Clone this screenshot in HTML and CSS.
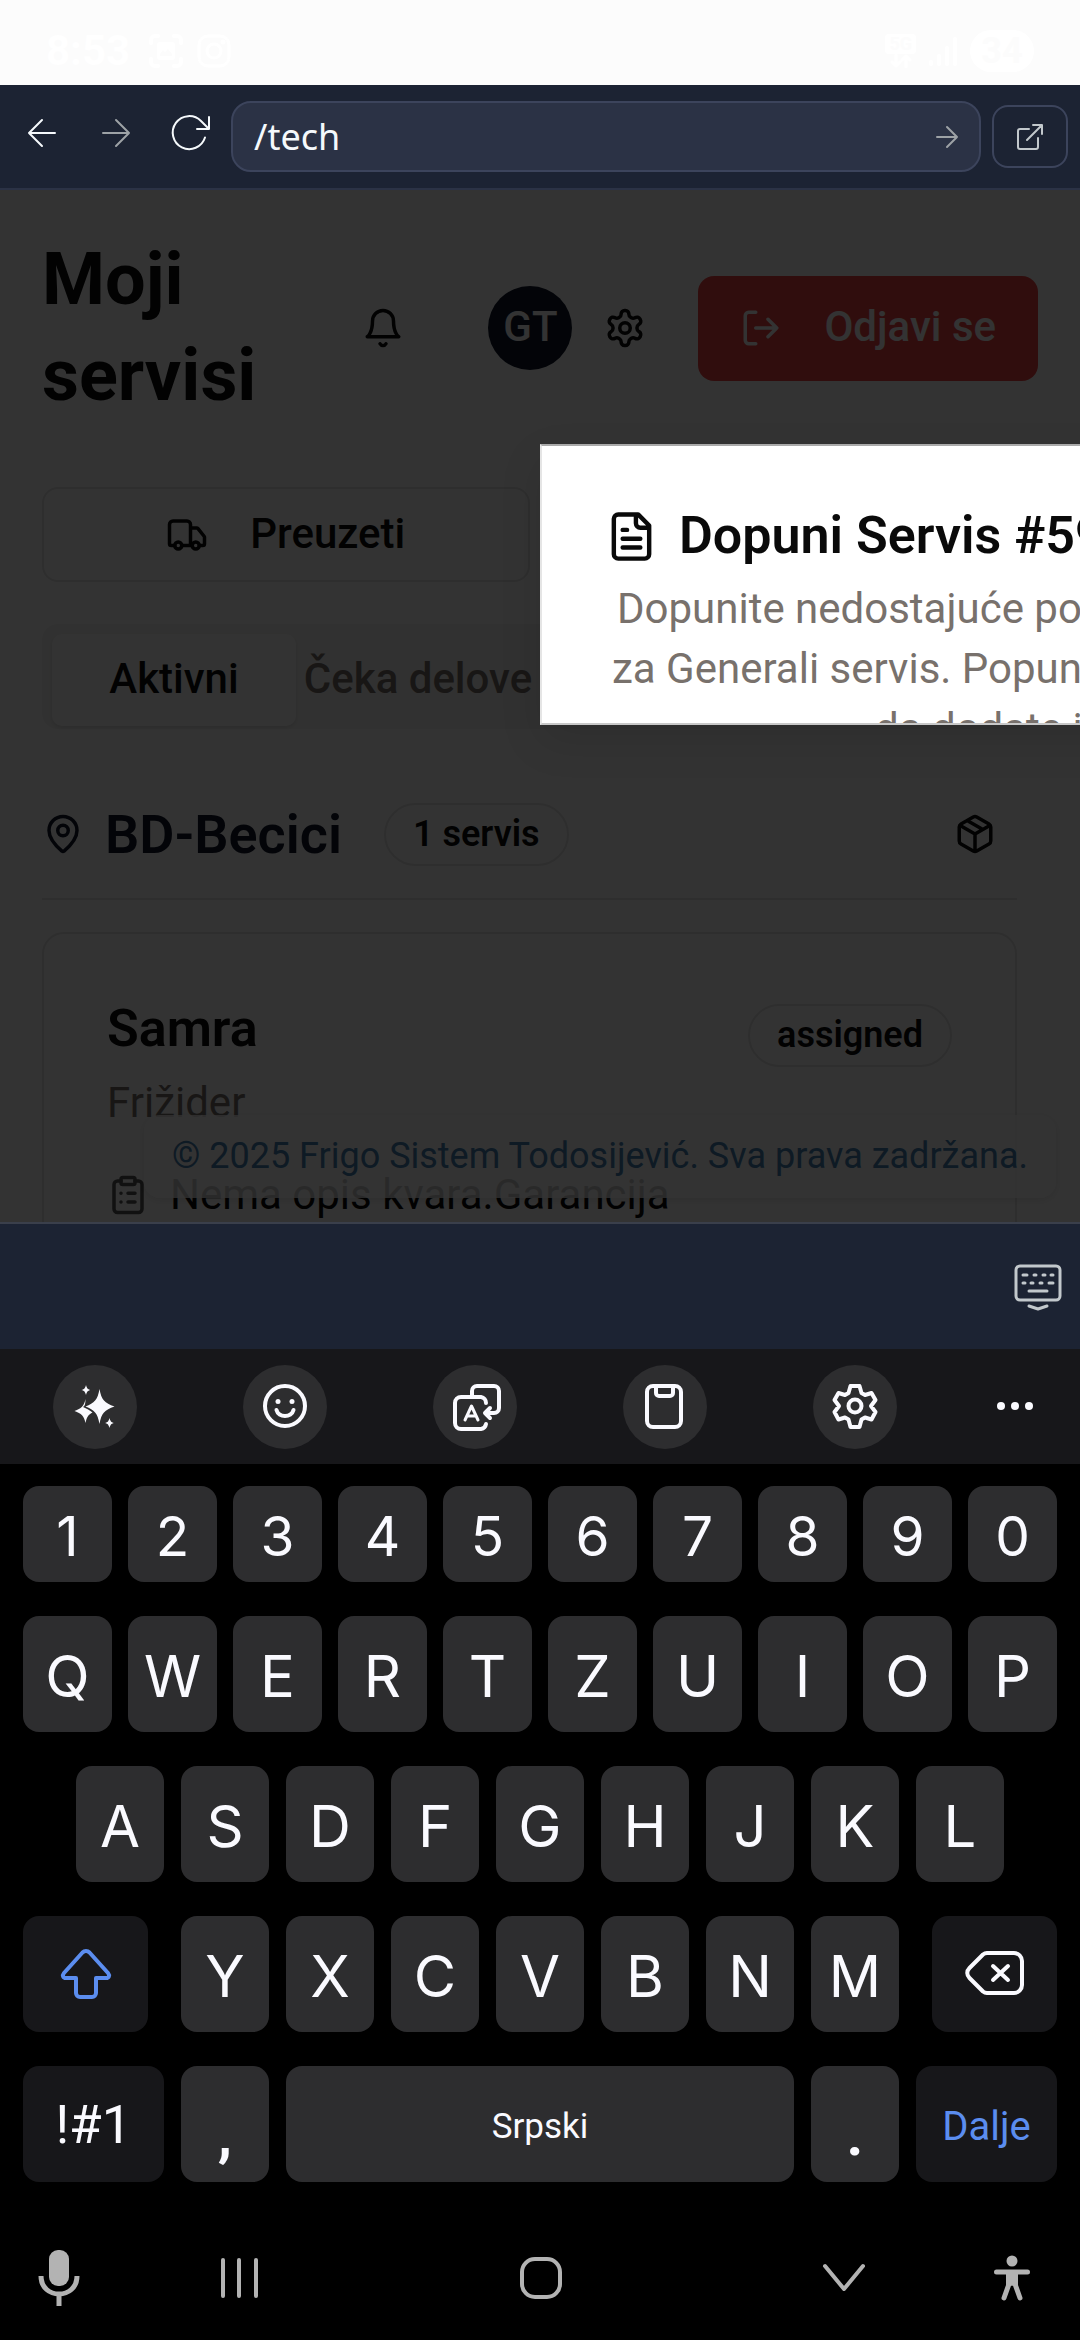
FILE: index.html
```html
<!DOCTYPE html>
<html lang="sr">
<head>
<meta charset="utf-8">
<meta name="viewport" content="width=device-width, initial-scale=1">
<title>Moji servisi</title>
<link rel="stylesheet" href="styles.css">
</head>
<body>
<div class="status">
  <div class="status-side">
    <span class="clock">8:53</span>
    <svg width="36" height="36" viewBox="0 0 36 36" fill="none" stroke="currentColor" stroke-width="4" stroke-linecap="round"><path d="M3 10V7a4 4 0 0 1 4-4h3M26 3h3a4 4 0 0 1 4 4v3M33 26v3a4 4 0 0 1-4 4h-3M10 33H7a4 4 0 0 1-4-4v-3"/><path fill="currentColor" stroke="none" fill-rule="evenodd" d="M12 9h12a3 3 0 0 1 3 3v12a3 3 0 0 1-3 3H12a3 3 0 0 1-3-3V12a3 3 0 0 1 3-3zM12 21v2h12v-2l-4-5-3 3-2-2z"/></svg>
    <svg width="36" height="36" viewBox="0 0 36 36" fill="none" stroke="currentColor" stroke-width="3"><rect x="3" y="3" width="30" height="30" rx="9"/><circle cx="18" cy="18" r="7"/><circle cx="27" cy="9" r="1"/></svg>
  </div>
  <div class="status-side">
    <span class="network">
      <span class="network-type">5G</span>
      <svg width="24" height="14" viewBox="0 0 24 14" fill="none" stroke="currentColor" stroke-width="3" stroke-linecap="round" stroke-linejoin="round"><path d="M7 1v11M3 8l4 4 4-4M17 13V2M13 6l4-4 4 4"/></svg>
    </span>
    <svg width="30" height="32" viewBox="0 0 30 32" fill="none" stroke="currentColor" stroke-width="4" stroke-linecap="round"><path d="M3 27v2M11 21v8M19 13v16M27 4v25"/></svg>
    <span class="battery">34</span>
  </div>
</div>

<header class="browser">
  <button class="nav-btn" aria-label="Nazad"><svg width="32" height="32" viewBox="0 0 32 32"><path d="M29 16H3M16 3L3 16l13 13"/></svg></button>
  <button class="nav-btn nav-btn-off" aria-label="Napred"><svg width="32" height="32" viewBox="0 0 32 32"><path d="M3 16h26M16 3l13 13-13 13"/></svg></button>
  <button class="nav-btn" aria-label="Osveži"><svg width="40" height="40" viewBox="0 0 40 40"><path d="M35 24.500A16.500 16.500 0 1 1 31 8l7 7M39 4v12H27"/></svg></button>
  <form class="address">
    <input type="text" value="/tech" aria-label="Adresa">
    <button class="go" type="button" aria-label="Idi"><svg width="24" height="24" viewBox="0 0 24 24"><path d="M2 12h20M12 2l10 10-10 10"/></svg></button>
  </form>
  <button class="open-btn" aria-label="Otvori"><svg width="30" height="30" viewBox="0 0 30 30"><path d="M14 7H5a2 2 0 0 0-2 2v16a2 2 0 0 0 2 2h16a2 2 0 0 0 2-2V16M12 18L27 3M18 3h9v9"/></svg></button>
</header>

<main class="app">
  <div class="head">
    <h1>Moji servisi</h1>
    <div class="head-tools">
      <button class="icon-btn bell" aria-label="Obaveštenja"><svg class="icon" viewBox="0 0 24 24"><path d="M6 8a6 6 0 0 1 12 0c0 7 3 9 3 9H3s3-2 3-9"/><path d="M10.300 21a1.940 1.940 0 0 0 3.400 0"/></svg></button>
      <span class="avatar">GT</span>
      <button class="icon-btn gear" aria-label="Podešavanja"><svg class="icon" viewBox="0 0 24 24"><path d="M12.220 2h-.440a2 2 0 0 0-2 2v.180a2 2 0 0 1-1 1.730l-.430.250a2 2 0 0 1-2 0l-.150-.080a2 2 0 0 0-2.730.730l-.220.380a2 2 0 0 0 .730 2.730l.150.100a2 2 0 0 1 1 1.720v.510a2 2 0 0 1-1 1.740l-.150.090a2 2 0 0 0-.730 2.730l.220.380a2 2 0 0 0 2.730.730l.150-.080a2 2 0 0 1 2 0l.430.250a2 2 0 0 1 1 1.730V20a2 2 0 0 0 2 2h.440a2 2 0 0 0 2-2v-.180a2 2 0 0 1 1-1.730l.430-.250a2 2 0 0 1 2 0l.150.080a2 2 0 0 0 2.730-.730l.220-.390a2 2 0 0 0-.730-2.730l-.150-.080a2 2 0 0 1-1-1.740v-.500a2 2 0 0 1 1-1.740l.150-.090a2 2 0 0 0 .730-2.730l-.220-.380a2 2 0 0 0-2.730-.730l-.150.080a2 2 0 0 1-2 0l-.430-.250a2 2 0 0 1-1-1.730V4a2 2 0 0 0-2-2z"/><circle cx="12" cy="12" r="3"/></svg></button>
      <button class="logout"><svg class="icon" viewBox="0 0 24 24"><path d="M9 21H5a2 2 0 0 1-2-2V5a2 2 0 0 1 2-2h4M16 17l5-5-5-5M21 12H9"/></svg><span class="label">Odjavi se</span></button>
    </div>
  </div>

  <div class="actions">
    <button class="outline"><svg class="icon" viewBox="0 0 24 24"><path d="M14 18V6a2 2 0 0 0-2-2H4a2 2 0 0 0-2 2v11a1 1 0 0 0 1 1h2M15 18H9M19 18h2a1 1 0 0 0 1-1v-3.650a1 1 0 0 0-.220-.624l-3.480-4.350A1 1 0 0 0 17.520 8H14"/><circle cx="17" cy="18" r="2"/><circle cx="7" cy="18" r="2"/></svg><span class="label">Preuzeti</span></button>
  </div>

  <div class="tabs" role="tablist">
    <button class="tab tab-on" role="tab" aria-selected="true"><span class="label">Aktivni</span></button>
    <button class="tab" role="tab" aria-selected="false"><span class="label">Čeka delove</span></button>
  </div>

  <section class="group">
    <div class="group-head">
      <svg class="icon" viewBox="0 0 24 24"><path d="M20 10c0 4.993-5.539 10.193-7.399 11.799a1 1 0 0 1-1.202 0C9.539 20.193 4 14.993 4 10a8 8 0 0 1 16 0"/><circle cx="12" cy="10" r="3"/></svg>
      <h2>BD-Becici</h2>
      <span class="badge">1 servis</span>
      <button class="icon-btn parts" aria-label="Delovi"><svg class="icon" viewBox="0 0 24 24"><path d="M11 21.730a2 2 0 0 0 2 0l7-4A2 2 0 0 0 21 16V8a2 2 0 0 0-1-1.730l-7-4a2 2 0 0 0-2 0l-7 4A2 2 0 0 0 3 8v8a2 2 0 0 0 1 1.730zM12 22V12M3.300 7L12 12l8.700-5M7.500 4.270l9 5.150"/></svg></button>
    </div>
    <article class="card">
      <div class="card-head">
        <div>
          <h3>Samra</h3>
          <p class="muted">Frižider</p>
        </div>
        <span class="badge">assigned</span>
      </div>
      <div class="card-row">
        <svg class="icon soft" viewBox="0 0 24 24"><rect x="8" y="2" width="8" height="4" rx="1"/><path d="M16 4h2a2 2 0 0 1 2 2v14a2 2 0 0 1-2 2H6a2 2 0 0 1-2-2V6a2 2 0 0 1 2-2h2M12 11h4M12 16h4M8 11h.010M8 16h.010"/></svg>
        <span>Nema opis kvara.Garancija</span>
      </div>
    </article>
  </section>

  <footer class="copyright">© 2025 Frigo Sistem Todosijević. Sva prava zadržana.</footer>
  <div class="overlay"></div>

  <div class="dialog" role="dialog" aria-labelledby="dialog-title">
    <h2 class="dialog-title" id="dialog-title"><svg viewBox="0 0 24 24"><path d="M15 2H6a2 2 0 0 0-2 2v16a2 2 0 0 0 2 2h12a2 2 0 0 0 2-2V7zM14 2v4a2 2 0 0 0 2 2h4M10 9H8M16 13H8M16 17H8"/></svg>Dopuni Servis #59</h2>
    <p class="dialog-text">
      <span class="line line-a">Dopunite nedostajuće po</span>
      <span class="line line-b">za Generali servis. Popun</span>
      <span class="line line-c">da dodate i</span>
    </p>
  </div>
</main>

<div class="accessory">
  <button class="hide-keys" aria-label="Sakrij tastaturu"><svg width="48" height="50" viewBox="0 0 48 50" fill="none" stroke="currentColor" stroke-width="3" stroke-linecap="round" stroke-linejoin="round"><rect x="2" y="2" width="44" height="34" rx="4"/><path d="M9 11h4M20 11h2M29 11h2M37 11h2M9 19h2M17 19h2M26 19h2M35 19h4M15 27h18M15 42l9 3 9-3"/></svg></button>
</div>

<div class="keyboard">
  <div class="tools">
    <button class="tool" aria-label="AI"><svg width="48" height="48" viewBox="0 0 48 48" fill="currentColor"><path d="M28.500 6c2 11 5 14 15 17.500-10 3.500-13 6.500-15 17.500-2-11-5-14-14-17.500 9-3.500 12-6.500 14-17.500z"/><path d="M14.500 16c-1.500 7-4 9.500-11 12 7 2.500 9.500 5 11 12 1.300-6 3-8.500 7-10.500-2.500-2-6-4-9.500-5.500 2-1 2.500-4 2.500-8z"/><path d="M15 2c1 3.500 1.500 4 4.500 5-3 1-3.500 1.500-4.500 5-1-3.500-1.500-4-4.500-5 3-1 3.500-1.500 4.500-5zM38.500 35c1 3.500 1.500 4 4.500 5-3 1-3.500 1.500-4.500 5-1-3.500-1.500-4-4.500-5 3-1 3.500-1.500 4.500-5z"/></svg></button>
    <button class="tool" aria-label="Emoji"><svg width="48" height="48" viewBox="0 0 48 48" fill="none" stroke="currentColor" stroke-width="4" stroke-linecap="round"><circle cx="24" cy="23" r="20"/><path d="M15.500 27c2 8 15 8 17 0"/><circle cx="17" cy="18.500" r="2.500" fill="currentColor" stroke="none"/><circle cx="31" cy="18.500" r="2.500" fill="currentColor" stroke="none"/></svg></button>
    <button class="tool" aria-label="Prevod"><svg width="52" height="48" viewBox="-2 0 48 48" fill="none" stroke="currentColor" stroke-width="4" stroke-linecap="round" stroke-linejoin="round"><path d="M19 12V8a5 5 0 0 1 5-5h17a5 5 0 0 1 5 5v17a5 5 0 0 1-5 5h-8M37 25l-5 5 5 5"/><path d="M33 20a6 6 0 0 0-5-6H8a6 6 0 0 0-6 6v20a6 6 0 0 0 6 6h20a6 6 0 0 0 5-5"/><path stroke-width="3" d="M12 37l6.500-14L25 37M14.500 33h8"/></svg></button>
    <button class="tool" aria-label="Klipbord"><svg width="48" height="48" viewBox="0 0 48 48" fill="none" stroke="currentColor" stroke-width="4"><rect x="6" y="3" width="34" height="41" rx="6"/><path d="M15 4v6a3 3 0 0 0 3 3h11a3 3 0 0 0 3-3V4"/></svg></button>
    <button class="tool" aria-label="Podešavanja tastature"><svg width="48" height="48" viewBox="0 0 48 48" fill="none" stroke="currentColor" stroke-width="4" stroke-linejoin="round"><path d="M19.500 3h9l2 7 3.500 2 6.500-2 4 7-4.500 6 4.500 6-4 7.500-6.500-2-3.500 2-2 7.500h-9l-2-7.500-3.500-2-6.500 2-4-7.500 4.500-6-4.500-6 4-7 6.500 2 3.500-2z"/><circle cx="24" cy="23" r="6.500"/></svg></button>
    <button class="tool tool-more" aria-label="Još"><svg width="40" height="48" viewBox="0 0 40 48" fill="currentColor"><circle cx="6" cy="23" r="4"/><circle cx="20" cy="23" r="4"/><circle cx="34" cy="23" r="4"/></svg></button>
  </div>

  <div class="keys">
    <div class="row row-wide">
      <button class="key digit">1</button><button class="key digit">2</button><button class="key digit">3</button><button class="key digit">4</button><button class="key digit">5</button><button class="key digit">6</button><button class="key digit">7</button><button class="key digit">8</button><button class="key digit">9</button><button class="key digit">0</button>
    </div>
    <div class="row row-wide">
      <button class="key">Q</button><button class="key">W</button><button class="key">E</button><button class="key">R</button><button class="key">T</button><button class="key">Z</button><button class="key">U</button><button class="key">I</button><button class="key">O</button><button class="key">P</button>
    </div>
    <div class="row row-home">
      <button class="key">A</button><button class="key">S</button><button class="key">D</button><button class="key">F</button><button class="key">G</button><button class="key">H</button><button class="key">J</button><button class="key">K</button><button class="key">L</button>
    </div>
    <div class="row row-shift">
      <button class="key dark shift" aria-label="Shift"><svg width="52" height="52" viewBox="0 0 52 52" fill="none" stroke="currentColor" stroke-width="4" stroke-linejoin="round"><path d="M22.500 4.500L4 25c-2 2.500-1 5 2 5h10v15a4 4 0 0 0 4 4h12a4 4 0 0 0 4-4V30h10c3 0 4-2.500 2-5L29.500 4.500a5 5 0 0 0-7 0z"/></svg></button>
      <div class="row">
        <button class="key">Y</button><button class="key">X</button><button class="key">C</button><button class="key">V</button><button class="key">B</button><button class="key">N</button><button class="key">M</button>
      </div>
      <button class="key dark" aria-label="Obriši"><svg width="60" height="48" viewBox="0 0 60 48" fill="none" stroke="currentColor" stroke-width="4" stroke-linecap="round" stroke-linejoin="round"><path d="M22 3h27a8 8 0 0 1 8 8v24a8 8 0 0 1-8 8H22a7 7 0 0 1-4-1.500L4.500 28c-3-3-3-7 0-10L18 4.500A7 7 0 0 1 22 3z"/><path d="M28 16l15 14M43 16L28 30"/></svg></button>
    </div>
    <div class="row row-space">
      <button class="key dark symbols">!#1</button><button class="key mark">,</button><button class="key space">Srpski</button><button class="key mark">.</button><button class="key dark next">Dalje</button>
    </div>
  </div>

  <nav class="system">
    <button aria-label="Glas"><svg width="42" height="56" viewBox="0 0 42 56" fill="none" stroke="currentColor" stroke-width="5"><rect x="11" y="0" width="20" height="36" rx="9" fill="currentColor" stroke="none"/><path d="M3 26c0 24 36 24 36 0M21 44v12"/></svg></button>
    <button aria-label="Nedavno"><svg width="40" height="42" viewBox="0 0 40 42" stroke="currentColor" stroke-width="4" stroke-linecap="round"><path d="M4 3v36M20 3v36M37 3v36"/></svg></button>
    <button aria-label="Početna"><svg width="44" height="44" viewBox="0 0 44 44" fill="none" stroke="currentColor" stroke-width="4"><rect x="3" y="3" width="38" height="38" rx="13"/></svg></button>
    <button aria-label="Zatvori tastaturu"><svg width="44" height="30" viewBox="0 0 44 30" fill="none" stroke="currentColor" stroke-width="4" stroke-linecap="round" stroke-linejoin="round"><path d="M3 3l19 23L41 3"/></svg></button>
    <button aria-label="Pristupačnost"><svg width="38" height="46" viewBox="0 0 38 46" fill="currentColor" stroke="currentColor" stroke-linecap="round" stroke-linejoin="round"><circle cx="19" cy="6" r="5.500" stroke="none"/><path stroke-width="5" fill="none" d="M3.500 17h31M16 19v10l-5 14M22 19v10l5 14"/><path stroke="none" d="M13 17h12v13h-4l-2 1-2-1h-4z"/></svg></button>
  </nav>
</div>
</body>
</html>
```

FILE: styles.css
```css
* { box-sizing: border-box; }

body {
  margin: 0;
  height: 100vh;
  display: flex;
  flex-direction: column;
  overflow: hidden;
  background: #000;
  font-family: Roboto, "Liberation Sans", sans-serif;
}

h1, h2, h3, p { margin: 0; }

button {
  display: flex;
  align-items: center;
  justify-content: center;
  margin: 0;
  padding: 0;
  border: 0;
  background: none;
  color: inherit;
  font: inherit;
  white-space: nowrap;
}

svg { flex: none; display: block; }

.icon {
  width: 42px;
  height: 42px;
  fill: none;
  stroke: currentColor;
  stroke-width: 2;
  stroke-linecap: round;
  stroke-linejoin: round;
}

/* phone status bar */
.status {
  flex: none;
  height: 85px;
  padding: 16px 46px 0;
  display: flex;
  align-items: center;
  justify-content: space-between;
  background: #fcfcfc;
  color: #fff;
}
.status-side { display: flex; align-items: center; gap: 12px; }
.clock { margin-right: 6px; font-size: 42px; font-weight: 700; }
.network { display: grid; justify-items: center; }
.network-type {
  padding: 0 4px;
  border-radius: 4px;
  background: #fff;
  color: #fcfcfc;
  font-size: 18px;
  font-weight: 700;
  line-height: 20px;
}
.battery {
  width: 64px;
  height: 42px;
  border-radius: 21px;
  background: #fff;
  color: #fcfcfc;
  font-size: 36px;
  font-weight: 700;
  line-height: 42px;
  text-align: center;
}

/* browser bar */
.browser {
  flex: none;
  height: 105px;
  padding: 0 12px 0 5px;
  display: flex;
  align-items: center;
  background: #1c2333;
  border-bottom: 2px solid #2b3245;
  color: #f5f9fc;
}
.browser svg {
  fill: none;
  stroke: currentColor;
  stroke-width: 2;
  stroke-linecap: round;
  stroke-linejoin: round;
}
.nav-btn { width: 74px; height: 84px; padding-bottom: 8px; }
.nav-btn-off { color: #9da2a6; }
.address {
  flex: 1;
  min-width: 0;
  height: 71px;
  margin: 0 11px 0 4px;
  padding: 0 20px 0 21px;
  display: flex;
  align-items: center;
  background: #2b3245;
  border: 2px solid #3c445c;
  border-radius: 20px;
}
.address input {
  flex: 1;
  min-width: 0;
  padding: 0;
  border: 0;
  outline: 0;
  background: none;
  color: #f5f9fc;
  font: 36px "Noto Sans", sans-serif;
}
.go { color: #9da2a6; }
.open-btn {
  width: 76px;
  height: 63px;
  border: 2px solid #3c445c;
  border-radius: 16px;
  color: #c2c8cc;
}

/* page */
.app {
  flex: 1;
  min-height: 0;
  position: relative;
  overflow: hidden;
  padding: 42px;
  background: #fff;
  color: #0a0a0a;
  font-size: 42px;
}
.label { padding-bottom: 3px; }
.head { display: flex; align-items: center; justify-content: space-between; }
h1 { width: min-content; font-size: 72px; line-height: 96px; font-weight: 700; }
.head-tools { display: flex; align-items: center; }
.icon-btn { width: 106px; height: 84px; }
.bell { margin-right: 52px; }
.gear { margin-right: 20px; }
.avatar {
  width: 84px;
  height: 84px;
  border-radius: 50%;
  background: #0f172a;
  color: #fff;
  font-weight: 500;
  line-height: 81px;
  text-align: center;
}
.logout {
  height: 105px;
  padding: 0 42px;
  gap: 42px;
  border-radius: 16px;
  background: #ef4444;
  color: #fff;
  font-weight: 500;
}

.actions {
  margin-top: 63px;
  display: grid;
  grid-template-columns: 1fr 1fr;
  gap: 21px;
}
.outline {
  height: 95px;
  gap: 42px;
  border: 2px solid #e5e5e5;
  border-radius: 16px;
  font-weight: 500;
}

.tabs {
  height: 105px;
  margin-top: 42px;
  padding: 10px;
  display: grid;
  grid-template-columns: repeat(4, 1fr);
  align-items: start;
  background: #f5f5f4;
  border-radius: 16px;
}
.tab { height: 92px; border-radius: 10px; color: #78716c; font-weight: 500; }
.tab-on { background: #fff; color: #0a0a0a; box-shadow: 0 2px 4px rgba(0, 0, 0, .1); }

.group { margin: 63px 21px 0 0; }
.group-head {
  height: 108px;
  padding-bottom: 22px;
  display: flex;
  align-items: center;
  color: #0f172a;
  border-bottom: 2px solid #e5e5e5;
}
.group-head h2 { margin: 0 42px 0 21px; font-size: 54px; font-weight: 600; line-height: 63px; }
.parts { width: 84px; margin-left: auto; color: #0a0a0a; }
.badge {
  height: 63px;
  padding: 0 27px;
  border: 2px solid #e5e5e5;
  border-radius: 32px;
  color: #0a0a0a;
  font-size: 36px;
  font-weight: 600;
  line-height: 59px;
}
.card {
  margin-top: 32px;
  padding: 63px;
  border: 2px solid #e5e5e5;
  border-radius: 22px;
}
.card-head { display: flex; justify-content: space-between; align-items: flex-start; }
.card-head .badge { margin-top: 7px; }
h3 { font-size: 52px; font-weight: 600; line-height: 63px; }
.muted { margin-top: 13px; color: #78716c; line-height: 60px; }
.card-row { margin-top: 30px; display: flex; align-items: center; gap: 21px; line-height: 63px; white-space: nowrap; }
.soft { color: #555; }

.copyright {
  position: absolute;
  right: 24px;
  bottom: 24px;
  height: 83px;
  padding: 0 28px;
  border-radius: 16px;
  background: rgba(255, 255, 255, .8);
  box-shadow: 0 2px 8px rgba(0, 0, 0, .1);
  color: #4682b4;
  font-size: 36px;
  line-height: 83px;
  white-space: nowrap;
}
.overlay { position: absolute; inset: 0; background: rgba(0, 0, 0, .8); }

.dialog {
  position: absolute;
  left: 50%;
  top: 254px;
  width: 100%;
  height: 281px;
  padding: 54px 63px 0;
  overflow: hidden;
  background: #fff;
  border: 2px solid #e5e5e5;
  border-top-color: #aaa;
  border-bottom-color: #c8c8c8;
  box-shadow: 0 16px 40px rgba(0, 0, 0, .1);
}
.dialog-title {
  display: flex;
  align-items: center;
  gap: 21px;
  font-size: 52px;
  font-weight: 600;
  line-height: 72px;
  white-space: nowrap;
}
.dialog-title svg {
  width: 53px;
  height: 53px;
  fill: none;
  stroke: currentColor;
  stroke-width: 2;
  stroke-linecap: round;
  stroke-linejoin: round;
}
.dialog-text { margin-top: 7px; color: #78716c; line-height: 60px; }
.line { display: block; white-space: nowrap; }
.line-a { padding-left: 12px; }
.line-b { padding-left: 7px; }
.line-c { padding-left: 270px; }

/* bar above the keyboard */
.accessory {
  flex: none;
  height: 127px;
  padding: 4px 18px 0;
  display: flex;
  align-items: center;
  justify-content: flex-end;
  background: #1c2333;
  border-top: 2px solid #3a3f4b;
  color: #c2c8cc;
}

/* keyboard */
.keyboard { flex: none; color: #fafaff; font-family: Inter, "Liberation Sans", sans-serif; }
.tools {
  height: 115px;
  display: grid;
  grid-template-columns: repeat(5, 190fr) 130fr;
  align-items: center;
  justify-items: center;
  background: #17171a;
}
.tool { width: 84px; height: 84px; border-radius: 50%; background: #2d2d2f; }
.tool-more { background: none; }

.keys { padding: 22px 23px 0; display: grid; gap: 34px; }
.row { display: flex; gap: 17px; }
.row-wide { gap: 16px; }
.row-home { padding: 0 53px; }
.key {
  flex: 1 1 0;
  min-width: 0;
  height: 116px;
  padding-top: 4px;
  border-radius: 16px;
  background: #2d2d2f;
  font-size: 58px;
}
.digit { height: 96px; font-size: 55px; }
.dark { background: #17171a; }
.row-shift { gap: 33px; }
.row-shift > .key { flex-grow: 125; padding-top: 0; }
.row-shift > .row { flex: 718 1 0; }
.shift { color: #5b8def; }
.row-space { display: grid; grid-template-columns: 141fr 88fr 508fr 88fr 141fr; }
.symbols, .mark, .space, .next { font-family: Roboto, sans-serif; }
.symbols { padding-top: 2px; font-size: 53px; }
.mark { padding-top: 22px; font-weight: 700; }
.space { font-size: 35px; }
.next { font-size: 40px; color: #5b8def; }

.system {
  height: 158px;
  padding: 34px 22px 0 0;
  display: grid;
  grid-template-columns: 118fr 242fr 362fr 244fr 92fr;
  align-items: center;
  justify-items: center;
  color: #b3b3b3;
}
```
